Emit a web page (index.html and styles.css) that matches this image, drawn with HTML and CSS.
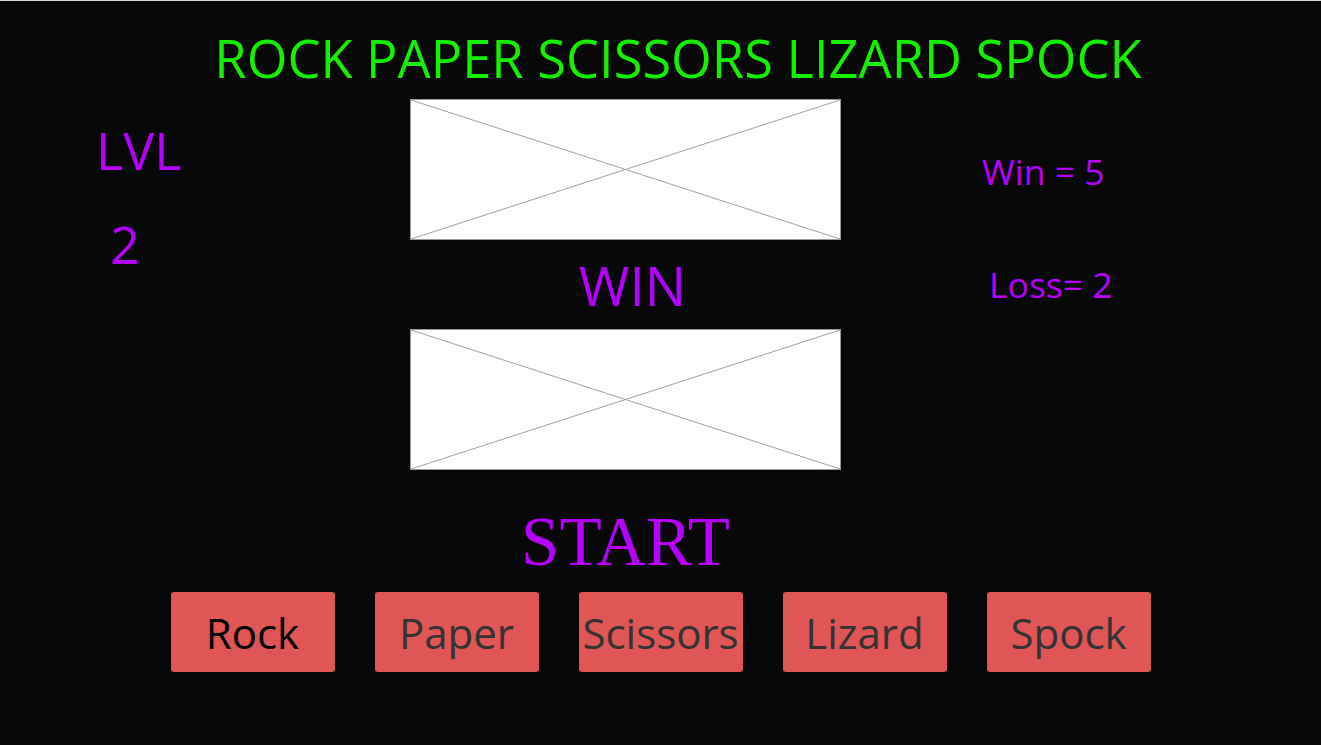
FILE: index.html
```html
<!DOCTYPE html>
<html>
<head>
<meta charset="utf-8">
<title>RPSLS</title>
<link rel="stylesheet" href="styles.css">
</head>
<body>
<div class="page">
  <h1 class="title">ROCK PAPER SCISSORS LIZARD SPOCK</h1>
  <div class="board">
    <div class="level">
      <div class="lvl-label">LVL</div>
      <div class="lvl-num">2</div>
    </div>
    <div class="arena">
      <div class="pic">
        <svg viewBox="0 0 430 140" preserveAspectRatio="none"><line x1="0" y1="0" x2="430" y2="140"/><line x1="430" y1="0" x2="0" y2="140"/></svg>
      </div>
      <div class="result">WIN</div>
      <div class="pic">
        <svg viewBox="0 0 430 140" preserveAspectRatio="none"><line x1="0" y1="0" x2="430" y2="140"/><line x1="430" y1="0" x2="0" y2="140"/></svg>
      </div>
      <div class="start">START</div>
    </div>
    <div class="score">
      <div class="wins">Win = 5</div>
      <div class="losses">Loss= 2</div>
    </div>
  </div>
  <div class="choices">
    <button class="choice choice-active">Rock</button>
    <button class="choice">Paper</button>
    <button class="choice">Scissors</button>
    <button class="choice">Lizard</button>
    <button class="choice">Spock</button>
  </div>
</div>
</body>
</html>
```
FILE: styles.css
```css
html, body {
  margin: 0;
  padding: 0;
  background: #080808;
}
body {
  font-family: "Open Sans", "Noto Sans", sans-serif;
  border-top: 1px solid #d8d8d8;
  height: 744px;
  overflow: hidden;
}
.page {
  display: flex;
  flex-direction: column;
}
.title {
  margin: 22px 0 0 0;
  text-align: center;
  color: #14f000;
  font-weight: 400;
  font-size: 52.4px;
  line-height: 70px;
  padding-left: 35px;
}
.board {
  display: grid;
  grid-template-columns: 410px 431px 1fr;
  margin-top: 6px;
}
.level {
  color: #b400ff;
  padding-left: 96px;
  padding-top: 16px;
}
.lvl-label {
  font-size: 52px;
  line-height: 70px;
}
.lvl-num {
  font-size: 52px;
  line-height: 70px;
  padding-left: 14px;
  margin-top: 24px;
}
.arena {
  display: flex;
  flex-direction: column;
  align-items: center;
}
.pic {
  width: 431px;
  height: 141px;
  box-sizing: border-box;
  background: #fff;
  border: 1px solid #999;
}
.pic svg {
  display: block;
  width: 100%;
  height: 100%;
}
.pic line {
  stroke: #a0a0a0;
  stroke-width: 1;
}
.result {
  color: #b400ff;
  font-size: 55px;
  line-height: 89px;
  padding-left: 14px;
}
.start {
  font-family: "Liberation Serif", "Times New Roman", serif;
  color: #b400ff;
  font-size: 69px;
  line-height: 80px;
  margin-top: 32px;
}
.score {
  color: #b400ff;
  font-size: 35.5px;
  padding-left: 141px;
}
.wins {
  line-height: 44px;
  margin-top: 50px;
}
.losses {
  line-height: 44px;
  margin-top: 69px;
  padding-left: 7px;
}
.choices {
  display: flex;
  justify-content: center;
  gap: 40px;
  margin-top: 10px;
}
.choice {
  width: 164px;
  height: 80px;
  padding: 0;
  border: none;
  border-radius: 3px;
  background: #e05555;
  color: #333;
  font-family: "Open Sans", "Noto Sans", sans-serif;
  font-size: 42px;
  white-space: nowrap;
  overflow: visible;
}
.choice-active {
  color: #000;
}
```
